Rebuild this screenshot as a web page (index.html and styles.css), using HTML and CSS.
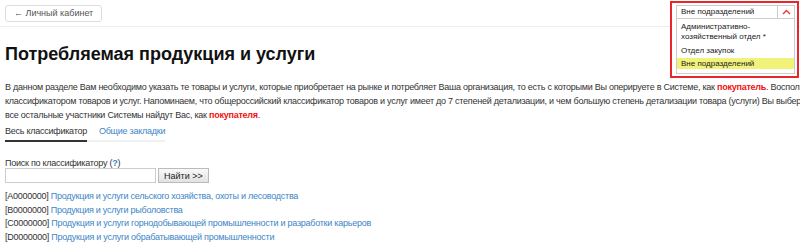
FILE: index.html
```html
<!DOCTYPE html>
<html lang="ru">
<head>
    <meta charset="UTF-8">
    <title>Потребляемая продукция и услуги</title>
    <link rel="stylesheet" href="styles.css">
</head>
<body>

    <div class="top-bar">
        <a class="back-btn" href="#">&larr; Личный кабинет</a>

        <div class="dept-select">
            <div class="dept-current">
                <span>Вне подразделений</span>
                <span class="dept-arrow">
                    <svg width="9" height="6" viewBox="0 0 9 6"><path d="M1 5 L4.5 1.5 L8 5" fill="none" stroke="#e23a3a" stroke-width="1.4"/></svg>
                </span>
            </div>
            <ul class="dept-list">
                <li>Административно-<br>хозяйственный отдел *</li>
                <li>Отдел закупок</li>
                <li class="active">Вне подразделений</li>
            </ul>
        </div>
    </div>

    <h1 class="page-title">Потребляемая продукция и услуги</h1>

    <p class="intro">
        В данном разделе Вам необходимо указать те товары и услуги, которые приобретает на рынке и потребляет Ваша организация, то есть с которыми Вы оперируете в Системе, как <b class="hl">покупатель</b>. Воспользуйтесь общероссийским<br>
        классификатором товаров и услуг. Напоминаем, что общероссийский классификатор товаров и услуг имеет до 7 степеней детализации, и чем большую степень детализации товара (услуги) Вы выберете, тем точнее<br>
        все остальные участники Системы найдут Вас, как <b class="hl">покупателя</b>.
    </p>

    <div class="tabs">
        <a class="tab current" href="#">Весь классификатор</a>
        <a class="tab" href="#">Общие закладки</a>
    </div>

    <form class="search">
        <label for="q">Поиск по классификатору (<a class="help" href="#">?</a>)</label>
        <div class="search-row">
            <input type="text" id="q" name="q">
            <button type="button">Найти &gt;&gt;</button>
        </div>
    </form>

    <ul class="classes">
        <li>[A0000000] <a href="#">Продукция и услуги сельского хозяйства, охоты и лесоводства</a></li>
        <li>[B0000000] <a href="#">Продукция и услуги рыболовства</a></li>
        <li>[C0000000] <a href="#">Продукция и услуги горнодобывающей промышленности и разработки карьеров</a></li>
        <li>[D0000000] <a href="#">Продукция и услуги обрабатывающей промышленности</a></li>
    </ul>

</body>
</html>
```

FILE: styles.css
```css
body {
  margin: 0;
  padding: 0 5px;
  font-family: "Liberation Sans", Arial, sans-serif;
  font-size: 9px;
  letter-spacing: -0.25px;
  color: #333;
  overflow: hidden;
}

a {
  color: #3d85c6;
  text-decoration: none;
}

/* top bar */
.top-bar {
  display: flex;
  justify-content: space-between;
  align-items: flex-start;
  margin: 0 -5px;
  padding: 5px 5px 0;
  height: 21px;
  border-bottom: 1px solid #eee;
}

.back-btn {
  display: inline-block;
  padding: 2px 8px;
  border: 1px solid #ddd;
  border-radius: 3px;
  font-size: 9px;
  letter-spacing: 0;
  color: #555;
  line-height: 11px;
}

.dept-select {
  position: absolute;
  top: 1px;
  left: 670px;
  width: 119px;
  padding: 2px 2px 2px 4px;
  border: 2px solid #e8262b;
  background: #fff;
  font-size: 8px;
  letter-spacing: 0;
  color: #222;
  z-index: 5;
}

.dept-current {
  display: flex;
  justify-content: space-between;
  height: 12px;
  line-height: 12px;
  border: 1px solid #ccc;
}

.dept-current span:first-child {
  padding-left: 4px;
}

.dept-arrow {
  display: flex;
  align-items: center;
  justify-content: center;
  width: 16px;
  border-left: 1px solid #ccc;
}

.dept-list {
  list-style: none;
  margin: 0;
  padding: 2px 0 4px;
  border: 1px solid #ccc;
  border-top: none;
  line-height: 9.5px;
}

.dept-list li {
  padding: 1px 4px;
  margin-bottom: 3px;
}

.dept-list li:nth-child(2) {
  margin-bottom: 1px;
}

.dept-list li.active {
  background: #f0f27a;
  padding: 1px 4px;
  margin-bottom: 0;
}

/* heading + text */
.page-title {
  margin: 17px 0 15px;
  font-size: 18px;
  letter-spacing: 0;
  color: #111;
}

.intro {
  margin: 0 0 3px;
  line-height: 14px;
  white-space: nowrap;
}

.hl {
  color: #ee1111;
}

/* tabs */
.tabs {
  display: inline-flex;
  gap: 12px;
  border-bottom: 2px solid #f0f0f0;
}

.tab {
  padding: 1px 0 4px;
  margin-bottom: -2px;
}

.tab.current {
  color: #333;
  border-bottom: 2px solid #333;
}

/* search */
.search {
  margin-top: 16px;
}

.search label {
  display: block;
}

.help {
  font-weight: bold;
}

.search-row {
  display: flex;
  gap: 2px;
}

.search input {
  width: 147px;
  height: 11px;
  padding: 1px;
  border: 1px solid #ccc;
}

.search button {
  font-family: inherit;
  font-size: 9px;
  letter-spacing: 0;
  padding: 1px 5px;
  border: 1px solid #bbb;
  background: linear-gradient(#f9f9f9, #e2e2e2);
  color: #222;
}

/* classifier list */
.classes {
  list-style: none;
  margin: 7px 0 0;
  padding: 0;
  line-height: 13.5px;
}
```
